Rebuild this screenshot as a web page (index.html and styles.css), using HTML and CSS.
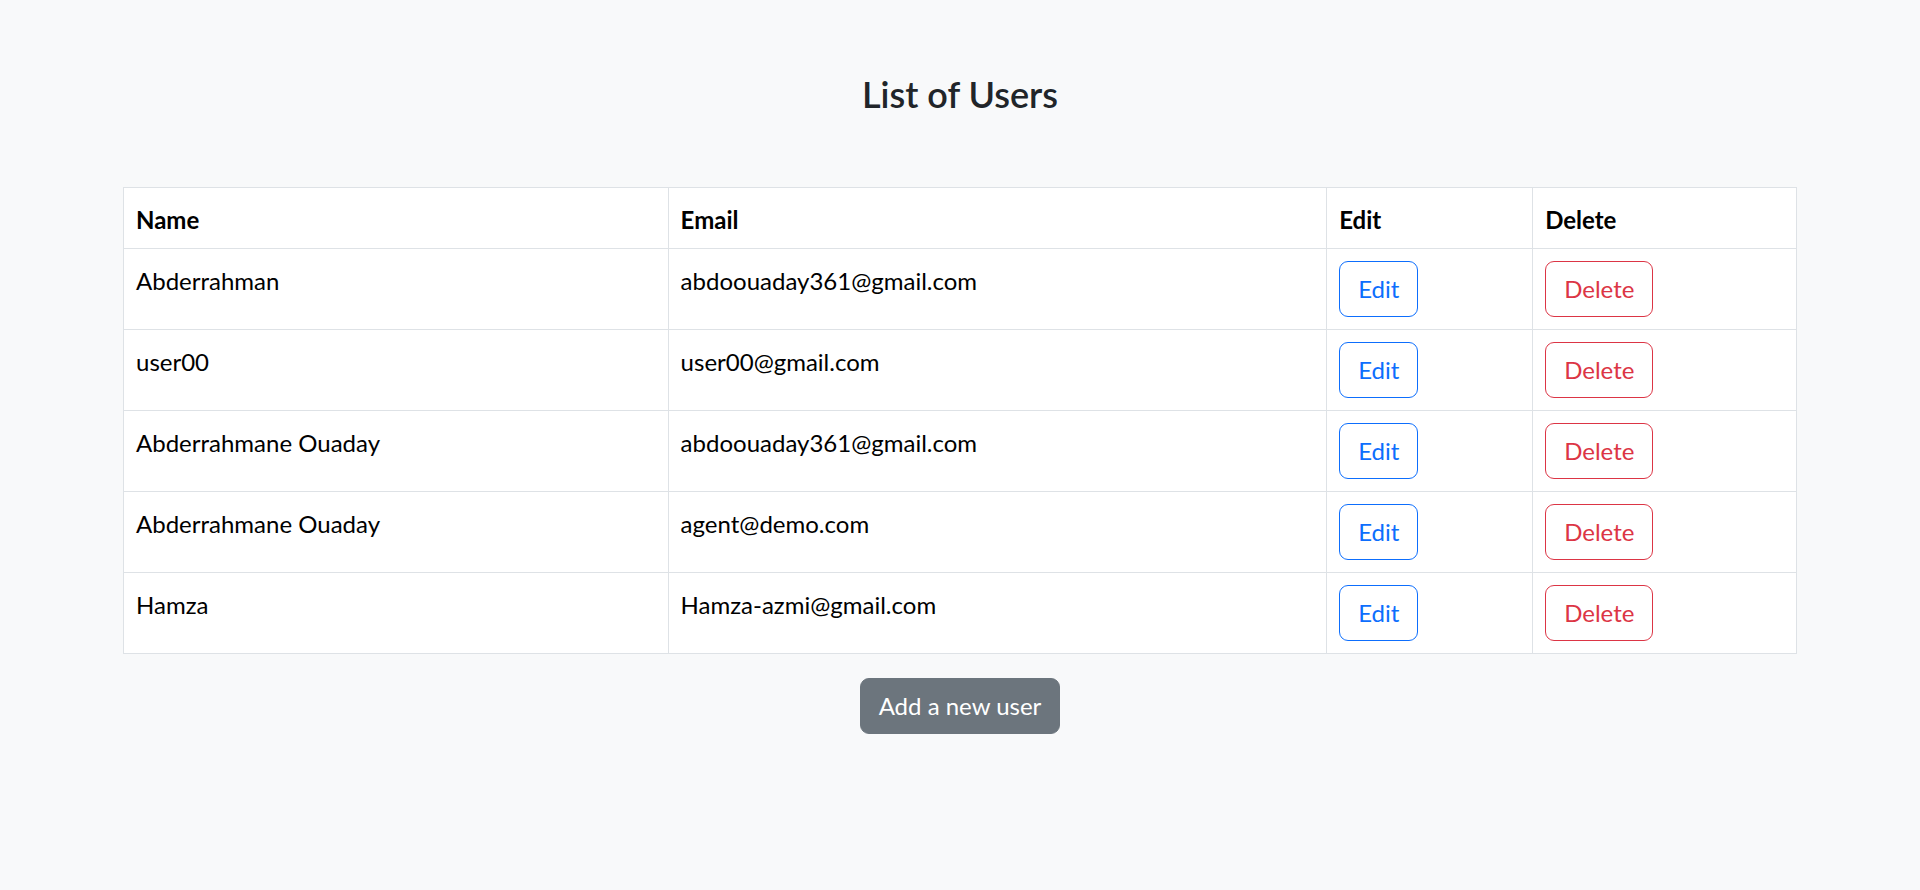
FILE: index.html
```html
<!DOCTYPE html>
<html lang="en">
<head>
<meta charset="utf-8">
<title>List of Users</title>
<link rel="stylesheet" href="styles.css">
</head>
<body>
<main class="container">
  <h1 class="title">List of Users</h1>
  <table class="users">
    <colgroup>
      <col class="c-name"><col class="c-email"><col class="c-edit"><col class="c-delete">
    </colgroup>
    <thead>
      <tr><th>Name</th><th>Email</th><th>Edit</th><th>Delete</th></tr>
    </thead>
    <tbody>
      <tr><td class="txt">Abderrahman</td><td class="txt">abdoouaday361@gmail.com</td><td><a class="btn btn-edit" href="#">Edit</a></td><td><a class="btn btn-delete" href="#">Delete</a></td></tr>
      <tr><td class="txt">user00</td><td class="txt">user00@gmail.com</td><td><a class="btn btn-edit" href="#">Edit</a></td><td><a class="btn btn-delete" href="#">Delete</a></td></tr>
      <tr><td class="txt">Abderrahmane Ouaday</td><td class="txt">abdoouaday361@gmail.com</td><td><a class="btn btn-edit" href="#">Edit</a></td><td><a class="btn btn-delete" href="#">Delete</a></td></tr>
      <tr><td class="txt">Abderrahmane Ouaday</td><td class="txt">agent@demo.com</td><td><a class="btn btn-edit" href="#">Edit</a></td><td><a class="btn btn-delete" href="#">Delete</a></td></tr>
      <tr><td class="txt">Hamza</td><td class="txt">Hamza-azmi@gmail.com</td><td><a class="btn btn-edit" href="#">Edit</a></td><td><a class="btn btn-delete" href="#">Delete</a></td></tr>
    </tbody>
  </table>
  <div class="actions">
    <a class="btn btn-add" href="#">Add a new user</a>
  </div>
</main>
</body>
</html>
```

FILE: styles.css
```css
* { box-sizing: border-box; }

body {
  margin: 0;
  background: #f8f9fa;
  color: #212529;
  font-family: Lato, "Liberation Sans", sans-serif;
  font-size: 24px;
  line-height: 1.5;
}

.container {
  width: 1674px;
  margin: 0 auto;
  padding-top: 73px;
}

.title {
  margin: 0 0 71px;
  text-align: center;
  font-size: 36px;
  font-weight: 600;
  line-height: 43px;
  color: #212529;
}

.users {
  width: 100%;
  border-collapse: collapse;
  background: #fff;
}

.c-name { width: 545px; }
.c-email { width: 659px; }
.c-edit { width: 206px; }
.c-delete { width: 264px; }

.users th,
.users td {
  border: 1.5px solid #dee2e6;
  padding: 12px;
  text-align: left;
  vertical-align: top;
  color: #000;
}

.users th {
  font-weight: 700;
  padding-top: 14px;
  padding-bottom: 10px;
}

.users td.txt {
  padding-top: 14px;
  padding-bottom: 10px;
}

.btn {
  display: inline-block;
  padding: 9px 18px;
  font-size: 24px;
  line-height: 36px;
  border: 1.5px solid transparent;
  border-radius: 9px;
  text-decoration: none;
}

.btn-edit {
  color: #0d6efd;
  border-color: #0d6efd;
}

.btn-delete {
  color: #dc3545;
  border-color: #dc3545;
}

.actions {
  display: flex;
  justify-content: center;
  padding-top: 24px;
}

.btn-add {
  background: #6c757d;
  border-color: #6c757d;
  color: #fff;
  padding: 9px 18px;
}
```
